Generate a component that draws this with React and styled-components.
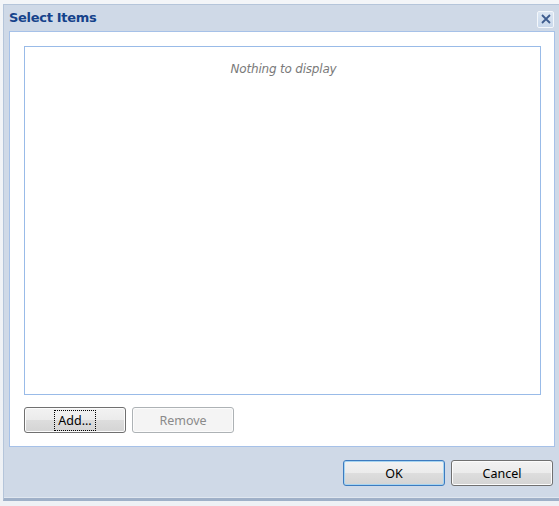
import React from "react";
import styled, { createGlobalStyle } from "styled-components";

const Global = createGlobalStyle`
  html, body { margin: 0; padding: 0; background: #e4e4e4; overflow: hidden; }
  #root { width: 559px; height: 506px; overflow: hidden; }
`;

const Page = styled.div`
  width: 559px;
  height: 506px;
  padding: 4px 0 0 3px;
  box-sizing: border-box;
  background: linear-gradient(#f3f5f8, #eef1f5);
`;

const Window = styled.div`
  width: 570px;
  height: 497px;
  box-sizing: border-box;
  background: #cfd9e7;
  border: 1px solid #b5c5da;
  border-bottom: 3px solid #9fb0c8;
  box-shadow: inset 0 -1px 0 #dfe6ef;
  display: flex;
  flex-direction: column;
  padding: 0 0 0 5px;
`;

const Header = styled.div`
  height: 26px;
  display: flex;
  align-items: center;
  padding-right: 6px;
  width: 551px;
  box-sizing: border-box;
`;

const Title = styled.div`
  font-family: "DejaVu Sans", sans-serif;
  font-weight: bold;
  font-size: 13px;
  color: #15428b;
  flex: 1;
  margin-top: -1px;
  letter-spacing: -0.3px;
`;

const Close = styled.div`
  width: 15px;
  height: 15px;
  border: 1px solid #f4f7fb;
  border-radius: 2px;
  background: linear-gradient(#dde7f3, #cad9ec);
  display: flex;
  align-items: center;
  justify-content: center;
  margin-top: 2px;
`;

const Body = styled.div`
  width: 546px;
  height: 416px;
  box-sizing: border-box;
  background: #fff;
  border: 1px solid #a6c1e8;
  padding: 14px 13px 13px 14px;
  display: flex;
  flex-direction: column;
  gap: 12px;
`;

const Grid = styled.div`
  height: 349px;
  box-sizing: border-box;
  border: 1px solid #99bbe8;
  display: flex;
  justify-content: center;
  padding-top: 15px;
`;

const Empty = styled.div`
  font-family: "DejaVu Sans", sans-serif;
  font-style: italic;
  font-size: 12px;
  color: #7a7a7a;
  height: 14px;
  padding-left: 2px;
  letter-spacing: -0.2px;
`;

const Row = styled.div`
  display: flex;
  gap: 6px;
  justify-content: ${(p) => (p.$end ? "flex-end" : "flex-start")};
`;

const Button = styled.div`
  width: 102px;
  height: 26px;
  box-sizing: border-box;
  border: 1px solid ${(p) => (p.$default ? "#3d7bbf" : p.$disabled ? "#adb2b5" : "#707070")};
  border-radius: 3px;
  background: ${(p) =>
    p.$disabled
      ? "#f4f4f4"
      : "linear-gradient(#f2f2f2 0%, #ebebeb 50%, #dddddd 51%, #d4d4d4 100%)"};
  box-shadow: ${(p) => (p.$default ? "inset 0 0 0 1px #a6d4f1" : "inset 0 0 0 1px #fcfcfc")};
  display: flex;
  align-items: center;
  justify-content: center;
  font-family: "Noto Sans", "Open Sans", sans-serif;
  font-size: 12.5px;
  color: ${(p) => (p.$disabled ? "#8a8a8a" : "#000")};
`;

const Focus = styled.span`
  outline: 1px dotted #000;
  padding: 1px 3px;
  line-height: 17px;
`;

const Footer = styled.div`
  width: 546px;
  box-sizing: border-box;
  padding: 13px 2px 0 0;
`;

export default function App() {
  return (
    <>
      <Global />
      <Page>
        <Window>
          <Header>
            <Title>Select Items</Title>
            <Close>
              <svg width="12" height="12" viewBox="0 0 12 12">
                <path d="M2 2 L10 10 M10 2 L2 10" stroke="#3f5d8f" strokeWidth="1.8" fill="none" />
              </svg>
            </Close>
          </Header>
          <Body>
            <Grid>
              <Empty>Nothing to display</Empty>
            </Grid>
            <Row>
              <Button>
                <Focus>Add...</Focus>
              </Button>
              <Button $disabled>Remove</Button>
            </Row>
          </Body>
          <Footer>
            <Row $end>
              <Button $default>OK</Button>
              <Button>Cancel</Button>
            </Row>
          </Footer>
        </Window>
      </Page>
    </>
  );
}
